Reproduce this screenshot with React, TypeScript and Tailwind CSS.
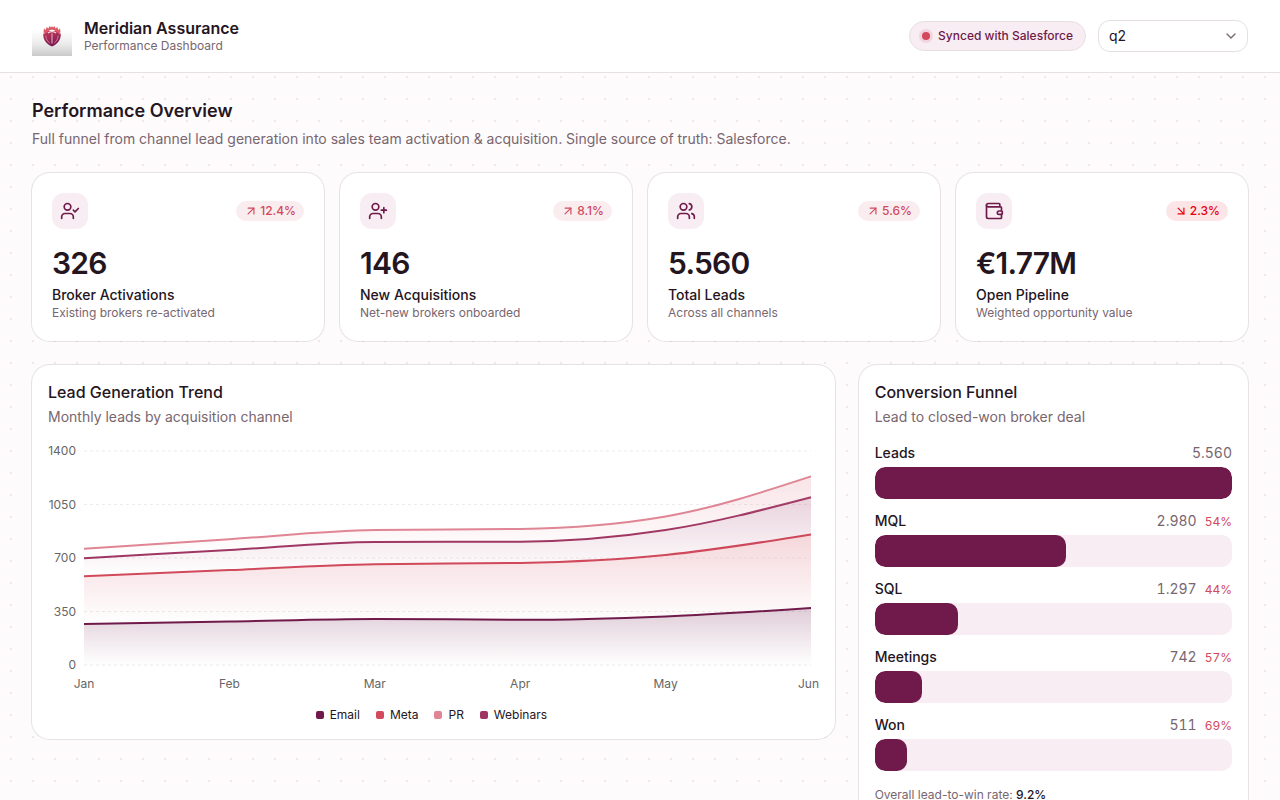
import { useLayoutEffect, useRef, useState } from "react";
import {
  ArrowDownRight,
  ArrowUpRight,
  ChevronDown,
  UserCheck,
  UserPlus,
  Users,
  Wallet,
  type LucideIcon,
} from "lucide-react";

type Stat = {
  icon: LucideIcon;
  value: string;
  label: string;
  hint: string;
  delta: string;
  up: boolean;
};

const stats: Stat[] = [
  { icon: UserCheck, value: "326", label: "Broker Activations", hint: "Existing brokers re-activated", delta: "12.4%", up: true },
  { icon: UserPlus, value: "146", label: "New Acquisitions", hint: "Net-new brokers onboarded", delta: "8.1%", up: true },
  { icon: Users, value: "5.560", label: "Total Leads", hint: "Across all channels", delta: "5.6%", up: true },
  { icon: Wallet, value: "€1.77M", label: "Open Pipeline", hint: "Weighted opportunity value", delta: "2.3%", up: false },
];

const months = ["Jan", "Feb", "Mar", "Apr", "May", "Jun"];

// Stacked bottom to top
const series = [
  { key: "email", color: "#6f1a4a", values: [268, 284, 301, 296, 318, 373] },
  { key: "meta", color: "#d1495b", values: [312, 337, 358, 372, 402, 481] },
  { key: "webinars", color: "#9e3562", values: [119, 131, 146, 139, 163, 243] },
  { key: "pr", color: "#e08594", values: [62, 71, 78, 83, 89, 137] },
];

const legend = [
  { label: "Email", swatch: "bg-[#6f1a4a]" },
  { label: "Meta", swatch: "bg-[#d1495b]" },
  { label: "PR", swatch: "bg-[#e08594]" },
  { label: "Webinars", swatch: "bg-[#9e3562]" },
];

const funnel = [
  { stage: "Leads", count: 5560, text: "5.560", rate: null },
  { stage: "MQL", count: 2980, text: "2.980", rate: "54%" },
  { stage: "SQL", count: 1297, text: "1.297", rate: "44%" },
  { stage: "Meetings", count: 742, text: "742", rate: "57%" },
  { stage: "Won", count: 511, text: "511", rate: "69%" },
];

type Point = [number, number];

// Monotone cubic interpolation, returned as the curve commands after the first point
function monotone(points: Point[]) {
  const n = points.length;
  const slope = (i: number) =>
    (points[i + 1][1] - points[i][1]) / (points[i + 1][0] - points[i][0]);
  const tangents: number[] = new Array(n).fill(0);

  for (let i = 1; i < n - 1; i++) {
    const s0 = slope(i - 1);
    const s1 = slope(i);
    tangents[i] =
      (Math.sign(s0) + Math.sign(s1)) *
      Math.min(Math.abs(s0), Math.abs(s1), 0.25 * Math.abs(s0 + s1));
  }
  tangents[0] = (3 * slope(0) - tangents[1]) / 2;
  tangents[n - 1] = (3 * slope(n - 2) - tangents[n - 2]) / 2;

  let d = "";
  for (let i = 0; i < n - 1; i++) {
    const [x0, y0] = points[i];
    const [x1, y1] = points[i + 1];
    const dx = (x1 - x0) / 3;
    d += `C${x0 + dx},${y0 + dx * tangents[i]},${x1 - dx},${y1 - dx * tangents[i + 1]},${x1},${y1}`;
  }
  return d;
}

function TrendChart() {
  const ref = useRef<HTMLDivElement>(null);
  const [width, setWidth] = useState(771);

  useLayoutEffect(() => {
    const el = ref.current;
    if (!el) return;
    const measure = () => setWidth(Math.round(el.getBoundingClientRect().width));
    measure();
    const observer = new ResizeObserver(measure);
    observer.observe(el);
    return () => observer.disconnect();
  }, []);

  const left = 36;
  const right = width - 8;
  const top = 8;
  const bottom = 222;
  const x = (i: number) => left + ((right - left) * i) / (months.length - 1);
  const y = (v: number) => bottom - ((bottom - top) * v) / 1400;

  const totals = months.map(() => 0);
  const layers = series.map((s) => {
    const base: Point[] = totals.map((t, i) => [x(i), y(t)]);
    s.values.forEach((v, i) => (totals[i] += v));
    const line: Point[] = totals.map((t, i) => [x(i), y(t)]);
    const back = [...base].reverse();
    const stroke = `M${line[0]}${monotone(line)}`;
    return { ...s, stroke, area: `${stroke}L${back[0]}${monotone(back)}Z` };
  });

  return (
    <div ref={ref} className="w-full">
      <svg
        className="block h-[252px] w-full overflow-visible text-xs"
        role="img"
        aria-label="Monthly leads by acquisition channel"
      >
        <defs>
          {series.map((s) => (
            <linearGradient key={s.key} id={`fill-${s.key}`} x1="0" y1="0" x2="0" y2="1">
              <stop offset="5%" stopColor={s.color} stopOpacity="0.21" />
              <stop offset="95%" stopColor={s.color} stopOpacity="0.01" />
            </linearGradient>
          ))}
        </defs>

        {[0, 350, 700, 1050, 1400].map((tick) => (
          <g key={tick}>
            <line x1={left} x2={right} y1={y(tick)} y2={y(tick)} stroke="#eeebed" strokeDasharray="3 3" />
            <text x={left - 8} y={y(tick)} dy="0.355em" textAnchor="end" fill="#666666">
              {tick}
            </text>
          </g>
        ))}

        {layers.map((l) => (
          <g key={l.key}>
            <path d={l.area} fill={`url(#fill-${l.key})`} />
            <path d={l.stroke} fill="none" stroke={l.color} strokeWidth="2" />
          </g>
        ))}

        {months.map((month, i) => (
          <text
            key={month}
            x={i === months.length - 1 ? width : x(i)}
            y={bottom + 23}
            textAnchor={i === months.length - 1 ? "end" : "middle"}
            fill="#666666"
          >
            {month}
          </text>
        ))}
      </svg>

      <ul className="flex items-center justify-center gap-4 pt-3 pr-1 text-xs">
        {legend.map((item) => (
          <li key={item.label} className="flex items-center gap-1.5">
            <span className={`size-2 rounded-[2px] ${item.swatch}`} />
            {item.label}
          </li>
        ))}
      </ul>
    </div>
  );
}

function Logo() {
  return (
    <svg viewBox="0 0 40 40" className="size-10" role="img" aria-label="Meridian Assurance logo">
      <defs>
        <linearGradient id="logo-tile" x1="0" y1="0" x2="0" y2="1">
          <stop offset="0.35" stopColor="#ffffff" />
          <stop offset="0.7" stopColor="#ebebeb" />
          <stop offset="1" stopColor="#cacaca" />
        </linearGradient>
        <linearGradient id="logo-shield" x1="0" y1="0" x2="0.3" y2="1">
          <stop offset="0" stopColor="#c63a5a" />
          <stop offset="1" stopColor="#7a1a52" />
        </linearGradient>
      </defs>
      <rect width="40" height="40" fill="url(#logo-tile)" />
      {/* Crown of flames */}
      <path
        d="M11.500 16.500l.5-4 2 1.500.5-3 2 1.500 1-2.500 1.500 1.500 1-1.500 1 1.500 1.500-1.500 1 2.500 2-1.500.5 3 2-1.500.5 4-3 1-2-2.500c-2-1.600-5-1.600-7 0l-2 2.500z"
        fill="#dc5a66"
      />
      <path
        d="M11.300 17.500c2 .2 3.700-.8 4.700-2.500h8c1 1.700 2.700 2.700 4.700 2.500.5 6-2.700 10.500-8.700 13-6-2.500-9.200-7-8.700-13z"
        fill="url(#logo-shield)"
      />
      <path d="M16 17c1.800-1.800 6.200-1.800 8 0" fill="none" stroke="#f3dfe4" strokeWidth="1.2" />
      <path d="M20 17.500v10" stroke="#e3b6c6" strokeWidth="1" />
      <path
        d="M13.800 19.500c.2 3.500 1.700 5.800 4 7.500M26.200 19.500c-.2 3.500-1.700 5.800-4 7.500"
        fill="none"
        stroke="#d493aa"
        strokeWidth="0.8"
      />
    </svg>
  );
}

function StatCard({ stat }: { stat: Stat }) {
  const Icon = stat.icon;
  const Arrow = stat.up ? ArrowUpRight : ArrowDownRight;

  return (
    <article className="rounded-[18px] bg-white p-5 ring-1 ring-[#24151e]/10">
      <div className="flex items-center justify-between">
        <span className="flex size-9 items-center justify-center rounded-xl bg-[#f7edf3] text-[#6f1a4a]">
          <Icon className="size-5" />
        </span>
        <span
          className={
            stat.up
              ? "flex items-center gap-0.5 rounded-full bg-[#faedef] px-2 py-0.5 text-xs font-medium text-[#d1495b]"
              : "flex items-center gap-0.5 rounded-full bg-[#fce5e7] px-2 py-0.5 text-xs font-medium text-[#e7000b]"
          }
        >
          <Arrow className="size-3.5" />
          {stat.delta}
        </span>
      </div>
      <p className="mt-4 text-3xl font-semibold tracking-tight">{stat.value}</p>
      <h2 className="mt-1 text-sm font-medium">{stat.label}</h2>
      <p className="text-xs text-[#78666f]">{stat.hint}</p>
    </article>
  );
}

export default function App() {
  const [period, setPeriod] = useState("q2");

  return (
    <div className="min-h-screen bg-[#fdfbfc] bg-[radial-gradient(#f2e6ea_1px,transparent_1px)] bg-[size:22px_22px] font-['Inter',sans-serif] text-[#24151e] antialiased">
      <header className="border-b border-[#e6e0e3] bg-white">
        <div className="flex items-center justify-between px-8 py-4">
          <div className="flex items-center gap-3">
            <Logo />
            <div>
              <p className="text-base leading-5 font-semibold">Meridian Assurance</p>
              <p className="text-xs text-[#78666f]">Performance Dashboard</p>
            </div>
          </div>

          <div className="flex items-center gap-3">
            <div className="flex items-center gap-2 rounded-full border border-[#e6e0e3] bg-[#f7edf3] px-3 py-1.5 text-xs font-medium text-[#6f1a4a]">
              <span className="size-2 rounded-full bg-[#d1495b] ring-3 ring-[#d1495b]/15" />
              Synced with Salesforce
            </div>
            <div className="relative">
              <select
                aria-label="Reporting period"
                value={period}
                onChange={(e) => setPeriod(e.target.value)}
                className="block h-8 w-[150px] appearance-none rounded-xl border border-[#e6e0e3] bg-white pr-8 pl-2.5 text-sm"
              >
                <option value="q1">q1</option>
                <option value="q2">q2</option>
                <option value="q3">q3</option>
                <option value="q4">q4</option>
              </select>
              <ChevronDown className="pointer-events-none absolute top-2 right-[9px] size-4 text-[#78666f]" />
            </div>
          </div>
        </div>
      </header>

      <main className="flex flex-col gap-6 px-8 py-6">
        <section>
          <h1 className="text-lg font-semibold">Performance Overview</h1>
          <p className="mt-1 text-sm text-[#78666f]">
            Full funnel from channel lead generation into sales team activation &amp; acquisition.
            Single source of truth: Salesforce.
          </p>
        </section>

        <section className="grid grid-cols-2 gap-4 lg:grid-cols-4">
          {stats.map((stat) => (
            <StatCard key={stat.label} stat={stat} />
          ))}
        </section>

        <div className="grid grid-cols-1 items-start gap-6 lg:grid-cols-3">
          <section className="min-w-0 rounded-[18px] bg-white p-4 ring-1 ring-[#24151e]/10 lg:col-span-2">
            <h2 className="text-base leading-[22px] font-medium">Lead Generation Trend</h2>
            <p className="mt-1 mb-4 text-sm text-[#78666f]">Monthly leads by acquisition channel</p>
            <TrendChart />
          </section>

          <section className="rounded-[18px] bg-white p-4 ring-1 ring-[#24151e]/10">
            <h2 className="text-base leading-[22px] font-medium">Conversion Funnel</h2>
            <p className="mt-1 mb-4 text-sm text-[#78666f]">Lead to closed-won broker deal</p>
            <div className="flex flex-col gap-3">
              {funnel.map((row) => (
                <div key={row.stage}>
                  <div className="flex items-baseline justify-between text-sm">
                    <span className="font-medium">{row.stage}</span>
                    <span className="text-[#78666f] tabular-nums">
                      {row.text}
                      {row.rate && <span className="ml-2 text-xs text-[#d1495b]">{row.rate}</span>}
                    </span>
                  </div>
                  <div className="mt-1 h-8 overflow-hidden rounded-[10px] bg-[#f7edf3]">
                    <div
                      className="h-full rounded-[10px] bg-[#6f1a4a]"
                      style={{ width: `${(row.count / funnel[0].count) * 100}%` }}
                    />
                  </div>
                </div>
              ))}
            </div>
            <p className="mt-4 text-xs text-[#78666f]">
              Overall lead-to-win rate: <span className="font-medium text-[#24151e]">9.2%</span>
            </p>
          </section>
        </div>
      </main>
    </div>
  );
}
